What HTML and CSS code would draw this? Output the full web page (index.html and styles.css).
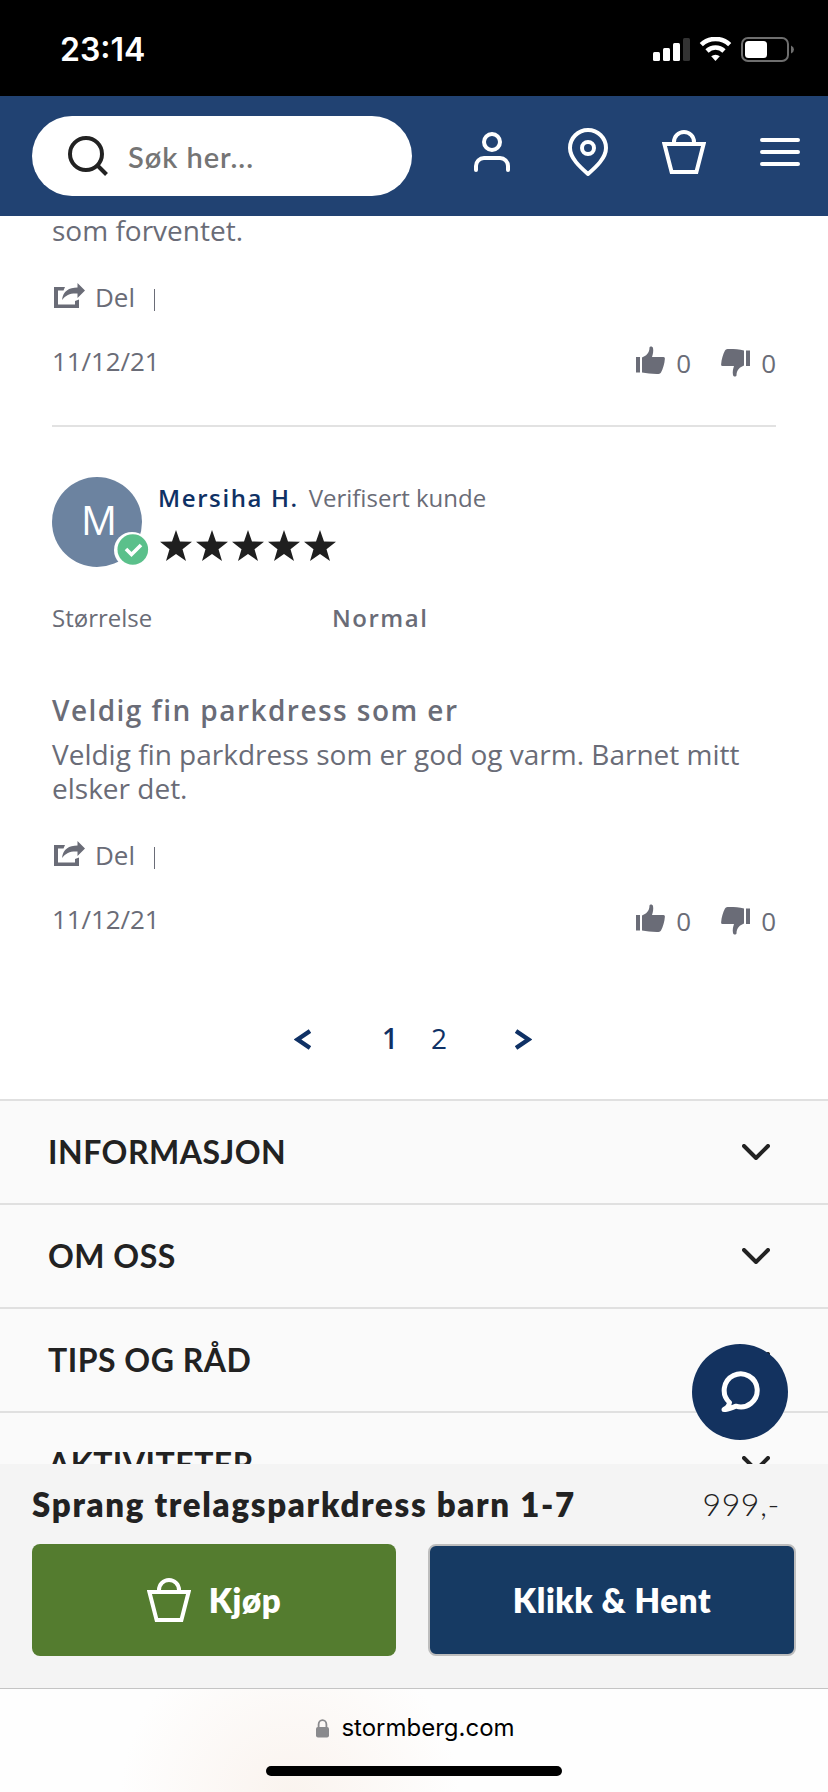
FILE: index.html
```html
<!DOCTYPE html>
<html lang="no">
<head>
<meta charset="utf-8">
<title>Stormberg</title>
<link rel="stylesheet" href="styles.css">
</head>
<body>
<svg class="defs" width="0" height="0">
  <symbol id="basket" viewBox="0 0 44 44"><path d="M12 13v-1a10 10 0 0 1 20 0v1M2.4 14h39.2L34.4 42H9.6z" fill="none" stroke="currentColor" stroke-width="4"/></symbol>
  <symbol id="share" viewBox="0 0 31 25"><path d="M0 4h11L9.500 7.500H4V21.500H21V18L25 16.500V25H0z"/><path d="M8 17C9 8 15 4.500 23.500 4.500V0L31 7.500L23.500 15V10.500C17 10 12 11.500 8 17z"/></symbol>
  <symbol id="thumb" viewBox="0 0 29 28"><path d="M0 11h4v15.500H0zM6 11.500C10 10 13.500 7 13.500 1.500C14 0 16.500 0 17 2C17.600 5 17 8 16 11H27.500Q29 11 28.900 12.500C28.500 18 27 22.500 25 26.500Q24.300 27.800 22.500 27.900C16 28 11 27.500 6 26.500z"/></symbol>
  <symbol id="star" viewBox="0 0 32 31"><path d="M16 0L20 11.500L32 11.800L22.500 19.300L26 31L16 24L6 31L9.500 19.300L0 11.800L12 11.500z"/></symbol>
  <symbol id="chevron" viewBox="0 0 28 16"><path d="M2 2L14 14L26 2" fill="none" stroke="currentColor" stroke-width="4" stroke-linecap="round" stroke-linejoin="round"/></symbol>
</svg>
<div class="screen">
  <div class="status">
    <span class="time">23:14</span>
    <svg class="status-icons" width="142" height="26" viewBox="0 0 142 26">
      <g fill="#fff"><rect x="0" y="15" width="7" height="9" rx="1.500"/><rect x="10" y="11" width="7" height="13" rx="1.500"/><rect x="20" y="6" width="7" height="18" rx="1.500"/></g>
      <rect x="30" y="1" width="7" height="23" rx="1.500" fill="#333"/>
      <g fill="none" stroke="#fff" stroke-width="4.600"><path d="M48.300 7.700a20.500 20.500 0 0 1 28.400 0"/><path d="M54 14a12.200 12.200 0 0 1 17 0"/></g>
      <path d="M58.200 19.300a6.600 6.600 0 0 1 8.600 0L62.500 24z" fill="#fff"/>
      <rect x="89" y="1" width="46" height="23" rx="6" fill="none" stroke="#6e6e6e" stroke-width="2"/>
      <rect x="92" y="4" width="22" height="17" rx="3.500" fill="#fff"/>
      <path d="M138 8.500q3 1.500 3 4t-3 4z" fill="#6e6e6e"/>
    </svg>
  </div>
  <header class="header">
    <div class="search">
      <svg width="40" height="40" viewBox="0 0 40 40" fill="none" stroke="#222" stroke-width="4"><circle cx="18" cy="18" r="16"/><path d="M30 30l8.500 8.500"/></svg>
      <span class="placeholder">Søk her...</span>
    </div>
    <div class="tools">
      <svg width="36" height="40" viewBox="0 0 36 40" fill="none" stroke="#fff" stroke-width="4" stroke-linecap="round"><circle cx="18" cy="10" r="8"/><path d="M2 38v-4a8 8 0 0 1 8-8h16a8 8 0 0 1 8 8v4"/></svg>
      <svg class="pin" width="40" height="48" viewBox="0 0 40 48" fill="none" stroke="#fff" stroke-width="4" stroke-linejoin="round"><path d="M20 46C12 39 2 30 2 20a18 18 0 0 1 36 0C38 30 28 39 20 46z"/><circle cx="20" cy="20" r="6"/></svg>
      <svg width="44" height="44"><use href="#basket"/></svg>
      <svg width="40" height="28" viewBox="0 0 40 28" stroke="#fff" stroke-width="4" stroke-linecap="round"><path d="M2 2h36M2 14h36M2 26h36"/></svg>
    </div>
  </header>
  <main class="reviews">
    <article>
      <p class="body">som forventet.</p>
      <div class="share"><svg width="31" height="25"><use href="#share"/></svg><span>Del</span><i class="bar"></i></div>
      <div class="meta"><span class="date">11/12/21</span>
        <div class="votes"><svg class="up" width="29" height="28"><use href="#thumb"/></svg><span>0</span><svg class="down" width="29" height="28"><use href="#thumb"/></svg><span>0</span></div>
      </div>
    </article>
    <article class="next">
      <div class="head">
        <div class="avatar"><span>M</span>
          <svg class="badge" width="36" height="36" viewBox="0 0 36 36"><circle cx="18" cy="18" r="18" fill="#fff"/><circle cx="18.800" cy="17.500" r="15.300" fill="#5bc08b"/><path d="M12 17l5.500 5.500L27 13" fill="none" stroke="#fff" stroke-width="3.600"/></svg>
        </div>
        <div class="who">
          <div class="names"><span class="name">Mersiha H.</span><span class="verified">Verifisert kunde</span></div>
          <div class="stars"><svg><use href="#star"/></svg><svg><use href="#star"/></svg><svg><use href="#star"/></svg><svg><use href="#star"/></svg><svg><use href="#star"/></svg></div>
        </div>
      </div>
      <div class="size"><span class="label">Størrelse</span><span class="value">Normal</span></div>
      <h3 class="title">Veldig fin parkdress som er</h3>
      <p class="body">Veldig fin parkdress som er god og varm. Barnet mitt elsker det.</p>
      <div class="share"><svg width="31" height="25"><use href="#share"/></svg><span>Del</span><i class="bar"></i></div>
      <div class="meta"><span class="date">11/12/21</span>
        <div class="votes"><svg class="up" width="29" height="28"><use href="#thumb"/></svg><span>0</span><svg class="down" width="29" height="28"><use href="#thumb"/></svg><span>0</span></div>
      </div>
    </article>
    <nav class="pager">
      <svg width="17" height="21" viewBox="0 0 17 21"><path d="M16 2L3.500 10.500L16 19"/></svg>
      <span class="current">1</span><span class="page">2</span>
      <svg width="17" height="21" viewBox="0 0 17 21"><path d="M1 2L13.500 10.500L1 19"/></svg>
    </nav>
  </main>
  <section class="links">
    <div class="row"><span>INFORMASJON</span><svg width="28" height="16"><use href="#chevron"/></svg></div>
    <div class="row"><span>OM OSS</span><svg width="28" height="16"><use href="#chevron"/></svg></div>
    <div class="row"><span>TIPS OG RÅD</span><svg width="28" height="16"><use href="#chevron"/></svg></div>
    <div class="row"><span>AKTIVITETER</span><svg width="28" height="16"><use href="#chevron"/></svg></div>
    <div class="chat"><svg width="40" height="42" viewBox="0 0 40 42" fill="none" stroke="#fff" stroke-width="5" stroke-linejoin="round"><path d="M9.500 31.500A16.500 16.500 0 1 1 16 35.200C12 36.500 8 38.500 4 38.500C7 37 9 35 9.500 31.500z"/></svg></div>
  </section>
  <section class="buybar">
    <div class="product"><span class="pname">Sprang trelagsparkdress barn 1-7</span><span class="price">999,-</span></div>
    <div class="buttons">
      <div class="btn buy"><svg width="44" height="44"><use href="#basket"/></svg><span>Kjøp</span></div>
      <div class="btn collect"><span>Klikk &amp; Hent</span></div>
    </div>
  </section>
  <footer class="browser">
    <div class="url"><svg width="13" height="19" viewBox="0 0 13 19"><rect y="8" width="13" height="10.500" rx="2" fill="#8a8a8d"/><path d="M2.600 9V5.500a3.900 4.300 0 0 1 7.800 0V9" fill="none" stroke="#8a8a8d" stroke-width="1.800"/></svg><span>stormberg.com</span></div>
    <div class="home"></div>
  </footer>
</div>
</body>
</html>
```
FILE: styles.css
```css
* { box-sizing: border-box; }
body { margin: 0; background: #fff; }
p, h3 { margin: 0; font-weight: 400; }
svg { display: block; flex: none; }
span { white-space: nowrap; }
.defs { position: absolute; }
.screen { width: 828px; height: 1792px; display: flex; flex-direction: column; overflow: hidden; font-family: Lato, sans-serif; }

.status { height: 96px; flex: none; background: #000; color: #fff; display: flex; justify-content: space-between; padding: 30px 33px 0 60px; }
.time { font: 600 32px/40px Inter, sans-serif; }
.status-icons { margin-top: 7px; }

.header { height: 120px; flex: none; background: #214272; color: #fff; display: flex; padding: 20px 28px 0 32px; justify-content: space-between; }
.search { width: 380px; height: 80px; border-radius: 40px; background: #fff; display: flex; padding: 20px 0 0 36px; gap: 20px; }
.placeholder { color: #757575; font-size: 29px; font-weight: 600; line-height: 40px; padding-top: 1px; letter-spacing: 0.95px; }
.tools { display: flex; height: 72px; align-items: center; gap: 54px; }
.pin { margin-left: 4px; }

.reviews { height: 883px; flex: none; padding: 0 52px; overflow: hidden; color: #6a6c77; font-family: "Open Sans", sans-serif; }
.body { font-size: 28px; line-height: 34px; }
.reviews article:first-child .body { margin-top: -3px; }
.share { display: flex; height: 36px; margin-top: 32px; padding-left: 2px; font-size: 26px; line-height: 36px; fill: currentColor; }
.share svg { margin: 4px 10px 0 0; }
.bar { width: 1px; height: 22px; margin: 10px 0 0 19px; background: #6a6c77; }
.meta { display: flex; justify-content: space-between; height: 36px; margin-top: 28px; font-size: 26px; line-height: 36px; }
.date { letter-spacing: -0.1px; }
.votes { display: flex; fill: currentColor; padding-top: 2px; }
.up { margin: 1px 11px 0 0; }
.down { margin: 4px 11px 0 30px; transform: rotate(180deg); }
.next { margin-top: 46px; padding-top: 50px; border-top: 2px solid #e2e2e2; }
.head { display: flex; height: 90px; }
.avatar { position: relative; width: 90px; height: 90px; border-radius: 50%; background: #6c83a0; color: #fff; font-size: 40px; line-height: 86px; text-align: center; padding-left: 4px; }
.badge { position: absolute; left: 62px; top: 55px; }
.who { padding: 3px 0 0 16px; }
.names { display: flex; gap: 10px; font-size: 24px; line-height: 36px; }
.name { color: #0f3165; font-weight: 600; letter-spacing: 1.6px; }
.stars { display: flex; gap: 4px; margin-top: 14px; padding-left: 2px; fill: #1f1f1f; }
.stars svg { width: 32px; height: 31px; }
.size { display: grid; grid-template-columns: 280px 1fr; margin-top: 34px; font-size: 24px; line-height: 34px; }
.value { font-weight: 600; letter-spacing: 1.5px; }
.title { font-size: 28px; font-weight: 600; line-height: 40px; letter-spacing: 1.45px; margin: 55px 0 7px; }
.pager { display: flex; align-items: center; height: 40px; margin: 81px 0 0 242px; font-size: 28px; line-height: 40px; color: #0f3165; }
.pager svg { margin-top: 3px; }
.pager path { fill: none; stroke: #0f3165; stroke-width: 4.500; }
.current { font-weight: 600; margin: 0 33px 0 71px; }
.page { margin-right: 68px; }

.links { position: relative; height: 365px; flex: none; overflow: hidden; background: #fafafa; color: #222; }
.row { height: 104px; border-top: 2px solid #e0e0e0; display: flex; align-items: center; justify-content: space-between; padding: 0 58px 0 47px; font-size: 32px; font-weight: 700; line-height: 40px; letter-spacing: 0.5px; }
.row span { padding: 0 0 1px 1px; }
.chat { position: absolute; right: 40px; top: 245px; width: 96px; height: 96px; border-radius: 50%; background: #13325f; display: flex; align-items: center; justify-content: center; }

.buybar { height: 224px; flex: none; background: #f4f4f4; color: #222; padding: 20px 32px 0; }
.product { display: flex; justify-content: space-between; height: 60px; padding-right: 16px; font-size: 32px; line-height: 40px; }
.pname { font-size: 33px; font-weight: 800; letter-spacing: 1.7px; }
.price { font-weight: 300; letter-spacing: 0.6px; }
.buttons { display: flex; gap: 32px; }
.btn { flex: 1; height: 112px; border-radius: 8px; display: flex; align-items: center; justify-content: center; color: #fff; font-size: 33px; font-weight: 800; letter-spacing: 0.6px; gap: 18px; }
.buy { background: #547c2f; }
.collect { background: #163a63; border: 2px solid #bdbdbd; }

.browser { height: 104px; flex: none; border-top: 1px solid #c4c4c4; background: radial-gradient(circle 170px at 290px 110px, #faf3ee, #fefefe); display: flex; flex-direction: column; align-items: center; padding-top: 21px; }
.url { display: flex; align-items: center; gap: 12px; height: 36px; margin-left: 3px; font: 24px/36px Inter, sans-serif; color: #000; }
.home { width: 296px; height: 10px; border-radius: 5px; background: #000; margin-top: 20px; }
```
